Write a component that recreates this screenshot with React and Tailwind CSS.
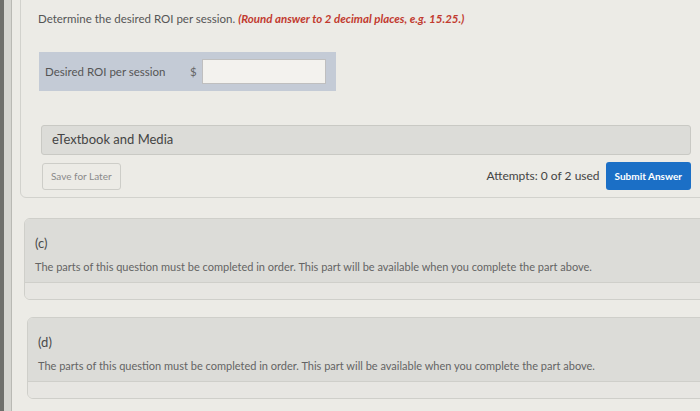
import React from "react";

function LockedPart({ label, className }) {
  return (
    <section className={`overflow-hidden rounded-md border border-[#cfcfca] ${className}`}>
      <div className="bg-[#dcdcd8] px-[10px] pt-[14px] pb-[7px]">
        <p className="text-[13px] leading-[20px] text-[#4a4a4a]">{label}</p>
        <p className="mt-[6px] text-[11px] leading-[16px] text-[#646464]">
          The parts of this question must be completed in order. This part will be available when you complete the part above.
        </p>
      </div>
      <div className="h-[17px] border-t border-[#cfcfca] bg-[#e7e6e2]" />
    </section>
  );
}

export default function App() {
  return (
    <div className="flex h-[411px] w-[700px] overflow-hidden bg-[#ecebe6] font-['Lato','Open_Sans',sans-serif]">
      <div className="w-[4px] shrink-0 bg-[#6e6f6b]" />
      <div className="w-[8px] shrink-0 border-r border-[#b9b9b4] bg-[#d5d5d0]" />

      <main className="flex min-w-0 flex-1 flex-col">
        <section className="-mt-[10px] ml-[8px] -mr-[12px] rounded-md border border-[#d2d2cd] pl-[17px] pr-[10px] pt-[20px] pb-[7px]">
          <p className="text-[11.5px] leading-[16px] text-[#555]">
            Determine the desired ROI per session.{" "}
            <span className="font-bold italic text-[#c23a2f]">(Round answer to 2 decimal places, e.g. 15.25.)</span>
          </p>

          <div className="mt-[25px] ml-[1px] flex h-[39px] w-[297px] items-center bg-[#c4cbd6] pl-[6px]">
            <span className="w-[145px] text-[11.5px] text-[#555]">Desired ROI per session</span>
            <span className="text-[11.5px] text-[#666]">$</span>
            <div className="ml-[5px] h-[25px] w-[124px] border border-[#bfbfbf] bg-[#f3f2ee]" />
          </div>

          <div className="mt-[34px] ml-[3px] flex h-[30px] w-[650px] items-center rounded-[3px] border border-[#c9c9c4] bg-[#dcdcd8] pl-[10px]">
            <span className="text-[13px] text-[#444]">eTextbook and Media</span>
          </div>

          <div className="mt-[7px] ml-[4px] flex w-[649px] items-center">
            <button className="h-[27px] rounded-[3px] border border-[#cdcdc8] px-[8px] text-[10px] text-[#8a8a8a]">
              Save for Later
            </button>
            <span className="ml-auto mr-[6px] text-[12px] text-[#444]">Attempts: 0 of 2 used</span>
            <button className="h-[28px] rounded-[3px] bg-[#1b6fc6] px-[9px] text-[10px] font-bold text-white">
              Submit Answer
            </button>
          </div>
        </section>

        <LockedPart label="(c)" className="mt-[20px] ml-[12px] -mr-[12px]" />
        <LockedPart label="(d)" className="mt-[17px] ml-[15px] -mr-[12px]" />
      </main>
    </div>
  );
}
